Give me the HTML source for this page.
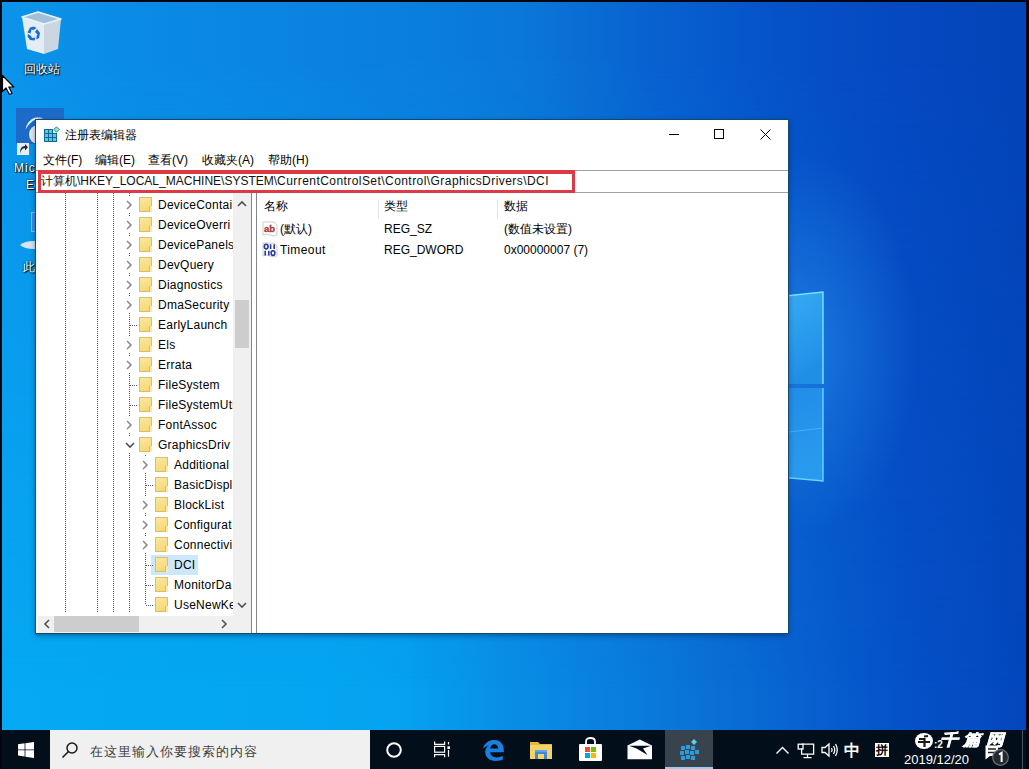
<!DOCTYPE html>
<html><head><meta charset="utf-8">
<style>
*{margin:0;padding:0;box-sizing:border-box}
html,body{width:1029px;height:769px;overflow:hidden}
body{position:relative;font-family:"Liberation Sans",sans-serif;font-size:12px;color:#000;
background:#0a6ed8}
.a{position:absolute}
#bg{left:0;top:0;width:1029px;height:769px;
background:linear-gradient(to right,#06a9f3 0px,#04a8f2 150px,#04a6f2 300px,#05a2f0 400px,#0890e6 500px,#0a7ada 650px,#0862d0 800px,#0552c8 900px,#0446bc 1029px)}
#bgT{left:0;top:0;width:1029px;height:769px;
background:linear-gradient(to right,#0b94ea 0px,#0a8ae4 150px,#0a84e0 300px,#0a7cdc 450px,#0a78d8 520px,#0862d0 650px,#0552c8 780px,#0548c0 900px,#0444b8 1029px);
-webkit-mask-image:linear-gradient(to bottom,#000 60px,transparent 690px);mask-image:linear-gradient(to bottom,#000 60px,transparent 690px)}
#glow{left:0;top:0;width:1029px;height:769px;background:radial-gradient(ellipse 120px 190px at 800px 345px,rgba(60,170,255,0.4),rgba(60,170,255,0) 100%)}
#bdT{left:0;top:0;width:1029px;height:2px;background:#020610}
#bdL{left:0;top:0;width:2px;height:769px;background:#020610}
#bdR{left:1026px;top:0;width:3px;height:769px;background:#020610}
.lbl{color:#fff;text-shadow:0 0 2px #000,1px 1px 1px #000;font-size:12px;white-space:nowrap}
#win{left:35px;top:119px;width:754px;height:515px;background:#fff;border:1px solid #124a72;box-shadow:0 2px 5px rgba(0,25,60,0.4)}
.t{position:absolute;white-space:nowrap;line-height:14px}
.dotv{position:absolute;width:1px;background:repeating-linear-gradient(to bottom,#5a5a5a 0 1px,transparent 1px 2px)}
.doth{position:absolute;height:1px;background:repeating-linear-gradient(to right,#5a5a5a 0 1px,transparent 1px 2px)}
.fold{position:absolute;width:13px;height:15px;background:linear-gradient(160deg,#fae7a0,#f6d66e);border:1px solid #d9c06a}.fold::after{content:"";position:absolute;left:9px;top:8px;width:2px;height:6px;border-left:1px solid #d9bc5a;background:#fbe9a8}
.arr{position:absolute;width:6px;height:6px;border-right:1.5px solid #8a8a8a;border-top:1.5px solid #8a8a8a;transform:rotate(45deg)}
#tb{left:0;top:730px;width:1029px;height:39px;background:#020f1a}
</style></head><body>
<div id="bg" class="a"></div><div id="bgT" class="a"></div><div id="glow" class="a"></div>

<!-- desktop icons -->
<svg class="a" style="left:21px;top:11px" width="41" height="44" viewBox="0 0 41 44">
 <path d="M1 6 L23 13 L23 43 L6 38 Z" fill="#e4edf3"/>
 <path d="M23 13 L40 8 L37 38 L23 43 Z" fill="#cad7e1"/>
 <path d="M1 6 L17 1 L40 8 L23 13 Z" fill="#9fc0d8" stroke="#e6f3fa" stroke-width="1.6" stroke-linejoin="round"/>
 <g fill="#1a6cd0">
  <path d="M6.5 21.5 L9 16.5 L13 15.5 L15.5 17 L12.5 19 L10.5 18.5 L9.5 22.5 Z"/>
  <path d="M16 18 L19 22 L18 27 L15.5 28.5 L15.5 25 L16.5 23.5 L14 21 Z"/>
  <path d="M13.5 29.5 L9 29 L6.5 25.5 L7 23 L10 25 L11 27 L14.5 26.5 Z"/>
 </g>
</svg>
<div class="a lbl" style="left:24px;top:61px">回收站</div>
<svg class="a" style="left:1px;top:74px" width="16" height="22" viewBox="0 0 16 22">
 <path d="M1.5 1.5 V17.5 L5 14 L8.5 20.5 L11 19.3 L7.8 13 H12.8 Z" fill="#fff" stroke="#000" stroke-width="1.2" stroke-linejoin="round"/>
</svg>

<div class="a" style="left:16px;top:108px;width:48px;height:36px;background:#1c6bc8"></div>
<svg class="a" style="left:16px;top:108px" width="40" height="40" viewBox="0 0 40 40">
 <path d="M9.5 21.5 C11 14 15.5 10 21 9.5 C24 9.3 26 9.8 28 10.8 C23 10 18 11.5 14.5 15 C12.5 17 11 19 9.5 21.5 Z" fill="#e6f2fb"/>
 <ellipse cx="22" cy="26.5" rx="9" ry="9.5" fill="#e3e9ef"/>
</svg>
<div class="a" style="left:17px;top:143px;width:12px;height:12px;background:#e9eef3"></div>
<svg class="a" style="left:18px;top:144px" width="11" height="11" viewBox="0 0 11 11"><path d="M2.5 10 C2.5 6 4.5 4.2 7 4.2 V6.5 L10 3.2 L7 0 V2 C3.5 2 1.5 5 2.5 10 Z" fill="#1e2935"/></svg>
<div class="a lbl" style="left:14px;top:161px;letter-spacing:1px">Micros</div>
<div class="a lbl" style="left:26px;top:178px">Ed</div>
<div class="a" style="left:31px;top:212px;width:6px;height:20px;background:#3a8fe2;border:1px solid #7cc0f5"></div>
<svg class="a" style="left:19px;top:240px" width="18" height="10" viewBox="0 0 18 10"><path d="M1 5 Q6 0.5 17 1 V9 Q6 9.5 1 5 Z" fill="#d5e6f2"/></svg>
<div class="a lbl" style="left:23px;top:259px">此</div>

<!-- windows logo fragment -->
<svg class="a" style="left:780px;top:285px" width="60" height="200" viewBox="0 0 60 200">
 <defs><linearGradient id="lg1" x1="0" y1="0" x2="0.3" y2="1"><stop offset="0" stop-color="#38acf4"/><stop offset="1" stop-color="#1f8fe6"/></linearGradient>
 <linearGradient id="lg2" x1="0" y1="0" x2="0.3" y2="1"><stop offset="0" stop-color="#1f8ce6"/><stop offset="1" stop-color="#2a9aee"/></linearGradient></defs>
 <path d="M0 11.5 L43 7 L43 99 L0 99 Z" fill="url(#lg1)"/>
 <path d="M0 11.5 L43 7 L43 99" fill="none" stroke="#7ee0ff" stroke-width="1.4"/>
 <path d="M0 103 L43 103 L43 196 L0 192 Z" fill="url(#lg2)"/>
 <path d="M43 103 L43 196 L0 192" fill="none" stroke="#6ad4fc" stroke-width="1.4"/>
 <path d="M0 148 L43 143" stroke="#3fb0f4" stroke-width="1.2"/>
</svg>

<!-- window -->
<div id="win" class="a"></div>

<!-- title -->
<svg class="a" style="left:44px;top:126px" width="16" height="16" viewBox="0 0 16 16">
 <path d="M0 3 H9 V7 H13 V16 H0 Z" fill="#17668e"/>
 <g fill="#4ccaf4"><rect x="1" y="4" width="3" height="3"/><rect x="5" y="4" width="3" height="3"/><rect x="1" y="8" width="3" height="3"/><rect x="5" y="8" width="3" height="3"/><rect x="9" y="8" width="3" height="3"/><rect x="1" y="12" width="3" height="3"/><rect x="5" y="12" width="3" height="3"/><rect x="9" y="12" width="3" height="3"/></g>
 <path d="M12.5 0.8 L15.2 3.5 L12.5 6.2 L9.8 3.5 Z" fill="#8fe6d6" stroke="#18957a" stroke-width="1"/>
</svg>
<div class="t" style="left:65px;top:128px;font-size:12px">注册表编辑器</div>
<div class="a" style="left:669px;top:134px;width:10px;height:1px;background:#000"></div>
<div class="a" style="left:714px;top:129px;width:10px;height:10px;border:1px solid #000"></div>
<svg class="a" style="left:760px;top:129px" width="11" height="11" viewBox="0 0 11 11"><path d="M0.5 0.5 L10.5 10.5 M10.5 0.5 L0.5 10.5" stroke="#000" stroke-width="1"/></svg>
<!-- menu -->
<div class="t" style="left:43px;top:153px">文件(F)</div>
<div class="t" style="left:95px;top:153px">编辑(E)</div>
<div class="t" style="left:148px;top:153px">查看(V)</div>
<div class="t" style="left:202px;top:153px">收藏夹(A)</div>
<div class="t" style="left:268px;top:153px">帮助(H)</div>
<!-- address -->
<div class="a" style="left:36px;top:170px;width:752px;height:23px;border-top:1px solid #a0a0a0;border-bottom:1px solid #a0a0a0"></div>
<div class="a" style="left:38px;top:170px;width:537px;height:23px;border:3px solid #dc3a44;border-top-width:4px"></div>
<div class="t" id="addr" style="left:41px;top:174px;color:#111">计算机\HKEY_LOCAL_MACHINE\SYSTEM\<span style="letter-spacing:0.44px">CurrentControlSet\Control\GraphicsDrivers\DCI</span></div>
<!-- panes -->
<div class="a" style="left:38px;top:193px;width:195px;height:423px;overflow:hidden">
<div class="dotv" style="left:27px;top:0;height:420px"></div>
<div class="dotv" style="left:59px;top:0;height:420px"></div>
<div class="dotv" style="left:75px;top:0;height:420px"></div>
<div class="dotv" style="left:91px;top:0;height:420px"></div>
<div class="dotv" style="left:107px;top:262px;height:150px"></div>
<div class="a" style="left:88px;top:4px;width:8px;height:16px;background:#fff"></div>
<svg class="a" style="left:88px;top:7px" width="7" height="10" viewBox="0 0 7 10"><path d="M1 1 L5 5 L1 9" fill="none" stroke="#8c8c8c" stroke-width="1.6"/></svg>
<div class="fold" style="left:101px;top:4px"></div>
<div class="t" style="left:120px;top:5px;color:#000;letter-spacing:0.25px">DeviceContai</div>
<div class="a" style="left:88px;top:24px;width:8px;height:16px;background:#fff"></div>
<svg class="a" style="left:88px;top:27px" width="7" height="10" viewBox="0 0 7 10"><path d="M1 1 L5 5 L1 9" fill="none" stroke="#8c8c8c" stroke-width="1.6"/></svg>
<div class="fold" style="left:101px;top:24px"></div>
<div class="t" style="left:120px;top:25px;color:#000;letter-spacing:0.25px">DeviceOverri</div>
<div class="a" style="left:88px;top:44px;width:8px;height:16px;background:#fff"></div>
<svg class="a" style="left:88px;top:47px" width="7" height="10" viewBox="0 0 7 10"><path d="M1 1 L5 5 L1 9" fill="none" stroke="#8c8c8c" stroke-width="1.6"/></svg>
<div class="fold" style="left:101px;top:44px"></div>
<div class="t" style="left:120px;top:45px;color:#000;letter-spacing:0.25px">DevicePanels</div>
<div class="a" style="left:88px;top:64px;width:8px;height:16px;background:#fff"></div>
<svg class="a" style="left:88px;top:67px" width="7" height="10" viewBox="0 0 7 10"><path d="M1 1 L5 5 L1 9" fill="none" stroke="#8c8c8c" stroke-width="1.6"/></svg>
<div class="fold" style="left:101px;top:64px"></div>
<div class="t" style="left:120px;top:65px;color:#000;letter-spacing:0.25px">DevQuery</div>
<div class="a" style="left:88px;top:84px;width:8px;height:16px;background:#fff"></div>
<svg class="a" style="left:88px;top:87px" width="7" height="10" viewBox="0 0 7 10"><path d="M1 1 L5 5 L1 9" fill="none" stroke="#8c8c8c" stroke-width="1.6"/></svg>
<div class="fold" style="left:101px;top:84px"></div>
<div class="t" style="left:120px;top:85px;color:#000;letter-spacing:0.25px">Diagnostics</div>
<div class="a" style="left:88px;top:104px;width:8px;height:16px;background:#fff"></div>
<svg class="a" style="left:88px;top:107px" width="7" height="10" viewBox="0 0 7 10"><path d="M1 1 L5 5 L1 9" fill="none" stroke="#8c8c8c" stroke-width="1.6"/></svg>
<div class="fold" style="left:101px;top:104px"></div>
<div class="t" style="left:120px;top:105px;color:#000;letter-spacing:0.25px">DmaSecurity</div>
<div class="doth" style="left:92px;top:132px;width:8px"></div>
<div class="fold" style="left:101px;top:124px"></div>
<div class="t" style="left:120px;top:125px;color:#000;letter-spacing:0.25px">EarlyLaunch</div>
<div class="a" style="left:88px;top:144px;width:8px;height:16px;background:#fff"></div>
<svg class="a" style="left:88px;top:147px" width="7" height="10" viewBox="0 0 7 10"><path d="M1 1 L5 5 L1 9" fill="none" stroke="#8c8c8c" stroke-width="1.6"/></svg>
<div class="fold" style="left:101px;top:144px"></div>
<div class="t" style="left:120px;top:145px;color:#000;letter-spacing:0.25px">Els</div>
<div class="a" style="left:88px;top:164px;width:8px;height:16px;background:#fff"></div>
<svg class="a" style="left:88px;top:167px" width="7" height="10" viewBox="0 0 7 10"><path d="M1 1 L5 5 L1 9" fill="none" stroke="#8c8c8c" stroke-width="1.6"/></svg>
<div class="fold" style="left:101px;top:164px"></div>
<div class="t" style="left:120px;top:165px;color:#000;letter-spacing:0.25px">Errata</div>
<div class="doth" style="left:92px;top:192px;width:8px"></div>
<div class="fold" style="left:101px;top:184px"></div>
<div class="t" style="left:120px;top:185px;color:#000;letter-spacing:0.25px">FileSystem</div>
<div class="doth" style="left:92px;top:212px;width:8px"></div>
<div class="fold" style="left:101px;top:204px"></div>
<div class="t" style="left:120px;top:205px;color:#000;letter-spacing:0.25px">FileSystemUti</div>
<div class="a" style="left:88px;top:224px;width:8px;height:16px;background:#fff"></div>
<svg class="a" style="left:88px;top:227px" width="7" height="10" viewBox="0 0 7 10"><path d="M1 1 L5 5 L1 9" fill="none" stroke="#8c8c8c" stroke-width="1.6"/></svg>
<div class="fold" style="left:101px;top:224px"></div>
<div class="t" style="left:120px;top:225px;color:#000;letter-spacing:0.25px">FontAssoc</div>
<div class="a" style="left:86px;top:244px;width:12px;height:16px;background:#fff"></div>
<svg class="a" style="left:87px;top:249px" width="10" height="7" viewBox="0 0 10 7"><path d="M1 1 L5 5 L9 1" fill="none" stroke="#505050" stroke-width="1.6"/></svg>
<div class="fold" style="left:101px;top:244px"></div>
<div class="t" style="left:120px;top:245px;color:#000;letter-spacing:0.25px">GraphicsDriv</div>
<div class="a" style="left:104px;top:264px;width:8px;height:16px;background:#fff"></div>
<svg class="a" style="left:104px;top:267px" width="7" height="10" viewBox="0 0 7 10"><path d="M1 1 L5 5 L1 9" fill="none" stroke="#8c8c8c" stroke-width="1.6"/></svg>
<div class="fold" style="left:117px;top:264px"></div>
<div class="t" style="left:136px;top:265px;color:#000;letter-spacing:0.25px">Additional</div>
<div class="doth" style="left:108px;top:292px;width:8px"></div>
<div class="fold" style="left:117px;top:284px"></div>
<div class="t" style="left:136px;top:285px;color:#000;letter-spacing:0.25px">BasicDispl</div>
<div class="a" style="left:104px;top:304px;width:8px;height:16px;background:#fff"></div>
<svg class="a" style="left:104px;top:307px" width="7" height="10" viewBox="0 0 7 10"><path d="M1 1 L5 5 L1 9" fill="none" stroke="#8c8c8c" stroke-width="1.6"/></svg>
<div class="fold" style="left:117px;top:304px"></div>
<div class="t" style="left:136px;top:305px;color:#000;letter-spacing:0.25px">BlockList</div>
<div class="a" style="left:104px;top:324px;width:8px;height:16px;background:#fff"></div>
<svg class="a" style="left:104px;top:327px" width="7" height="10" viewBox="0 0 7 10"><path d="M1 1 L5 5 L1 9" fill="none" stroke="#8c8c8c" stroke-width="1.6"/></svg>
<div class="fold" style="left:117px;top:324px"></div>
<div class="t" style="left:136px;top:325px;color:#000;letter-spacing:0.25px">Configurat</div>
<div class="a" style="left:104px;top:344px;width:8px;height:16px;background:#fff"></div>
<svg class="a" style="left:104px;top:347px" width="7" height="10" viewBox="0 0 7 10"><path d="M1 1 L5 5 L1 9" fill="none" stroke="#8c8c8c" stroke-width="1.6"/></svg>
<div class="fold" style="left:117px;top:344px"></div>
<div class="t" style="left:136px;top:345px;color:#000;letter-spacing:0.25px">Connectivi</div>
<div class="a" style="left:113px;top:362px;width:47px;height:20px;background:#cce8ff"></div>
<div class="doth" style="left:108px;top:372px;width:8px"></div>
<div class="fold" style="left:117px;top:364px"></div>
<div class="t" style="left:136px;top:365px;color:#000;letter-spacing:0.25px">DCI</div>
<div class="doth" style="left:108px;top:392px;width:8px"></div>
<div class="fold" style="left:117px;top:384px"></div>
<div class="t" style="left:136px;top:385px;color:#000;letter-spacing:0.25px">MonitorDa</div>
<div class="doth" style="left:108px;top:412px;width:8px"></div>
<div class="fold" style="left:117px;top:404px"></div>
<div class="t" style="left:136px;top:405px;color:#000;letter-spacing:0.25px">UseNewKe</div>
</div>
<div class="a" style="left:233px;top:193px;width:18px;height:423px;background:#f0f0f0"></div>
<div class="a" style="left:235px;top:300px;width:14px;height:48px;background:#cdcdcd"></div>
<svg class="a" style="left:237px;top:200px" width="10" height="7" viewBox="0 0 10 7"><path d="M1 6 L5 2 L9 6" fill="none" stroke="#505050" stroke-width="1.6"/></svg>
<svg class="a" style="left:237px;top:602px" width="10" height="7" viewBox="0 0 10 7"><path d="M1 1 L5 5 L9 1" fill="none" stroke="#505050" stroke-width="1.6"/></svg>
<div class="a" style="left:38px;top:616px;width:195px;height:17px;background:#f0f0f0"></div>
<div class="a" style="left:54px;top:616px;width:85px;height:16px;background:#cdcdcd"></div>
<svg class="a" style="left:43px;top:619px" width="7" height="10" viewBox="0 0 7 10"><path d="M6 1 L2 5 L6 9" fill="none" stroke="#505050" stroke-width="1.6"/></svg>
<svg class="a" style="left:221px;top:619px" width="7" height="10" viewBox="0 0 7 10"><path d="M1 1 L5 5 L1 9" fill="none" stroke="#505050" stroke-width="1.6"/></svg>
<div class="a" style="left:233px;top:616px;width:18px;height:17px;background:#f0f0f0"></div>
<div class="a" style="left:251px;top:193px;width:1px;height:440px;background:#828790"></div>
<div class="a" style="left:256px;top:193px;width:1px;height:440px;background:#828790"></div>
<!-- right pane -->
<div class="t" style="left:264px;top:199px">名称</div>
<div class="t" style="left:384px;top:199px">类型</div>
<div class="t" style="left:504px;top:199px">数据</div>
<div class="a" style="left:378px;top:199px;width:1px;height:20px;background:#e5e5e5"></div>
<div class="a" style="left:497px;top:199px;width:1px;height:20px;background:#e5e5e5"></div>
<svg class="a" style="left:262px;top:221px" width="16" height="16" viewBox="0 0 16 16">
 <path d="M1 1 H12 L15 4 V14 Q12 16 8 14 Q4 12 1 14 Z" fill="#fff" stroke="#c0c0c0" stroke-width="0.8"/>
 <text x="2" y="10.5" font-family="Liberation Sans" font-size="9.5" font-weight="bold" fill="#a83a3a" stroke="#a83a3a" stroke-width="0.3">ab</text>
</svg>
<div class="t" style="left:280px;top:222px">(默认)</div>
<div class="t" style="left:384px;top:222px">REG_SZ</div>
<div class="t" style="left:504px;top:222px">(数值未设置)</div>
<svg class="a" style="left:262px;top:242px" width="16" height="16" viewBox="0 0 16 16">
 <path d="M1 1 H12 L15 4 V14 Q12 16 8 14 Q4 12 1 14 Z" fill="#fff" stroke="#c0c0c0" stroke-width="0.8"/>
 <g fill="none" stroke="#2a3a9c" stroke-width="1.6">
  <ellipse cx="4.2" cy="4.6" rx="1.9" ry="2.3"/><path d="M8.6 2.2 V7 M12.2 2.2 V7"/>
  <path d="M3.2 8.8 V13.4 M6.8 8.8 V13.4"/><ellipse cx="11" cy="11.1" rx="1.9" ry="2.3"/>
 </g>
</svg>
<div class="t" style="left:280px;top:243px;letter-spacing:0.4px">Timeout</div>
<div class="t" style="left:384px;top:243px">REG_DWORD</div>
<div class="t" style="left:504px;top:243px">0x00000007 (7)</div>


<!-- taskbar -->
<div id="tb" class="a"></div>
<!-- start -->
<svg class="a" style="left:18px;top:742px" width="16" height="16" viewBox="0 0 16 16">
 <path d="M0 2.2 L6.6 1.3 V7.4 H0 Z M7.4 1.2 L16 0 V7.4 H7.4 Z M0 8.2 H6.6 V14.4 L0 13.6 Z M7.4 8.2 H16 V16 L7.4 14.8 Z" fill="#fff"/>
</svg>
<div class="a" style="left:50px;top:730px;width:320px;height:39px;background:#f0f0f0"></div>
<svg class="a" style="left:61px;top:742px" width="18" height="17" viewBox="0 0 18 17">
 <circle cx="11" cy="6" r="5" fill="none" stroke="#1a1a1a" stroke-width="1.5"/>
 <path d="M7.5 9.5 L1.5 15.5" stroke="#1a1a1a" stroke-width="1.6"/>
</svg>
<div class="t" style="left:90px;top:744px;font-size:13px;letter-spacing:1px;color:#404040;line-height:15px">在这里输入你要搜索的内容</div>
<!-- cortana -->
<svg class="a" style="left:385px;top:741px" width="18" height="18" viewBox="0 0 18 18"><circle cx="9" cy="9" r="6.8" fill="none" stroke="#fff" stroke-width="2"/></svg>
<!-- task view -->
<svg class="a" style="left:428px;top:738px" width="28" height="24" viewBox="0 0 28 24" fill="none" stroke="#fff" stroke-width="1.2">
 <path d="M6.6 3.6 V6.3 H16.6 V3.6 M6.6 19.2 V16.6 H16.6 V19.2"/><rect x="6.6" y="8.4" width="10" height="5.8"/>
 <path d="M20.5 4 V6.5 M20.5 12 V18.8"/><rect x="19.4" y="8.3" width="2.6" height="2.7" fill="#fff" stroke="none"/>
</svg>
<!-- edge -->
<svg class="a" style="left:482px;top:739px" width="23" height="23" viewBox="0 0 23 23">
 <path fill-rule="evenodd" d="M1 9.5 C2.5 3.5 7.5 1 12.5 1 C18.5 1 21.8 5.5 21.8 11 V13.3 H8.2 C8.5 16.5 11 18.5 14.5 18.5 C17 18.5 19 17.8 20.8 16.8 V20.6 C18.8 21.6 16.5 22 13.8 22 C7.2 22 3.2 18 3.2 12.8 C3.2 9.8 4.8 7.4 7.2 5.9 C5 6.8 2.8 8 1 9.5 Z M8.3 9.6 H16.2 C16 7 14.6 5.2 12.3 5.2 C10 5.2 8.6 7 8.3 9.6 Z" fill="#1b7fe0"/>
</svg>
<!-- explorer -->
<svg class="a" style="left:529px;top:740px" width="24" height="20" viewBox="0 0 24 20">
 <path d="M1 2 H9 L11 4 H23 V19 H1 Z" fill="#e6b83c"/>
 <path d="M1 5 H23 V19 H1 Z" fill="#f5d36a"/>
 <path d="M6 11 H18 V19 H15 V14 H9 V19 H6 Z" fill="#3d8bd0"/>
 <rect x="6" y="10" width="12" height="2" fill="#5aa6e6"/>
</svg>
<!-- store -->
<svg class="a" style="left:578px;top:737px" width="25" height="25" viewBox="0 0 25 25">
 <path d="M8 7 V4.5 C8 2 10 1 12.5 1 C15 1 17 2 17 4.5 V7" fill="none" stroke="#fff" stroke-width="1.8"/>
 <rect x="1" y="7" width="23" height="17" fill="#fff" rx="1"/>
 <rect x="7" y="10" width="5" height="5" fill="#f25022"/><rect x="13" y="10" width="5" height="5" fill="#7fba00"/>
 <rect x="7" y="16" width="5" height="5" fill="#00a4ef"/><rect x="13" y="16" width="5" height="5" fill="#ffb900"/>
</svg>
<!-- mail -->
<svg class="a" style="left:627px;top:739px" width="26" height="21" viewBox="0 0 26 21">
 <path d="M0.5 6.5 L12.8 0.5 L25 6.5 V20.2 H0.5 Z" fill="#fff"/>
 <path d="M2 6.8 H24 L16 9.5 L20.5 16 L9.5 9.5 Z" fill="#020f1a"/>
</svg>
<!-- active regedit -->
<div class="a" style="left:665px;top:730px;width:48px;height:39px;background:#38434d"></div>
<div class="a" style="left:665px;top:767px;width:48px;height:2px;background:#9ccaf0"></div>
<svg class="a" style="left:679px;top:737px" width="22" height="24" viewBox="0 0 22 24">
 <g fill="#2a9bdc">
 <rect x="2" y="9" width="4" height="4"/><rect x="7" y="8" width="4" height="4"/><rect x="12" y="9" width="4" height="4"/>
 <rect x="1" y="14" width="4" height="4"/><rect x="6" y="13" width="4" height="4"/><rect x="11" y="14" width="4" height="4"/><rect x="16" y="13" width="4" height="4"/>
 <rect x="2" y="19" width="4" height="4"/><rect x="7" y="18" width="4" height="4"/><rect x="12" y="19" width="4" height="4"/>
 </g>
 <path d="M15 2 L18 5 L15 8 L12 5 Z" fill="#5ad0e6"/>
</svg>
<!-- tray -->
<svg class="a" style="left:775px;top:745px" width="15" height="10" viewBox="0 0 15 10"><path d="M1.5 8.5 L7.5 2.5 L13.5 8.5" fill="none" stroke="#fff" stroke-width="1.4"/></svg>
<svg class="a" style="left:797px;top:743px" width="18" height="16" viewBox="0 0 18 16" fill="none" stroke="#fff" stroke-width="1.3">
 <path d="M5 1.2 H16.6 V11.2 H4.6 V5.5 M10.5 11.2 V14.5 M6.5 14.6 H14.5"/><rect x="1.2" y="1.2" width="4.8" height="4.8"/>
</svg>
<svg class="a" style="left:821px;top:742px" width="18" height="16" viewBox="0 0 18 16" fill="none" stroke="#fff" stroke-width="1.3">
 <path d="M1 5.5 H4 L8 2 V14 L4 10.5 H1 Z"/><path d="M10.5 6 Q11.8 8 10.5 10"/><path d="M12.5 4 Q15 8 12.5 12"/><path d="M14.5 2 Q18 8 14.5 14"/>
</svg>
<div class="t" style="left:844px;top:742px;color:#fff;font-size:16px;font-weight:bold;line-height:18px">中</div>
<div class="a" style="left:875px;top:743px;width:14px;height:14px;background:#fff"></div>
<div class="t" style="left:876px;top:743px;color:#000;font-size:12px;font-weight:bold;line-height:14px">拼</div>
<!-- watermark -->
<div class="a" style="left:915px;top:733px;width:18px;height:16px;border-radius:50%;background:#fff"></div>
<svg class="a" style="left:915px;top:733px" width="18" height="16" viewBox="0 0 18 16"><path d="M4 6 H9 M9 3.5 L13 3 M3 9 H15 M9.5 5 V14" stroke="#1a1a1a" stroke-width="2.2" fill="none"/></svg>
<div class="t" style="left:934px;top:739px;color:#fff;font-size:10px;font-weight:bold;line-height:11px">:2</div>
<div class="t" style="left:940px;top:732px;color:#fff;font-size:17px;font-weight:bold;font-style:italic;line-height:17px;letter-spacing:5px;-webkit-text-stroke:0.6px #fff;transform:scale(1.05,0.92);transform-origin:0 0">千篇网</div>
<div class="t" style="left:904px;top:753px;color:#fff;font-size:13px;line-height:14px">2019/12/20</div>
<svg class="a" style="left:984px;top:744px" width="27" height="23" viewBox="0 0 27 23">
 <path d="M1.5 1.5 H14 V12 H6 L1.5 15.5 Z" fill="#fff"/>
 <path d="M4 5 H12 M4 8.5 H12" stroke="#222" stroke-width="1.3"/>
 <circle cx="16.5" cy="13.5" r="7.8" fill="#25292e" stroke="#6a6e72" stroke-width="1.2"/>
 <path d="M15 10.5 L17.6 8.8 V18" stroke="#fff" stroke-width="2" fill="none"/>
</svg>
<div class="a" style="left:1022px;top:730px;width:1px;height:39px;background:#4a5560"></div>

<div id="bdT" class="a"></div><div id="bdL" class="a"></div><div id="bdR" class="a"></div>
</body></html>
